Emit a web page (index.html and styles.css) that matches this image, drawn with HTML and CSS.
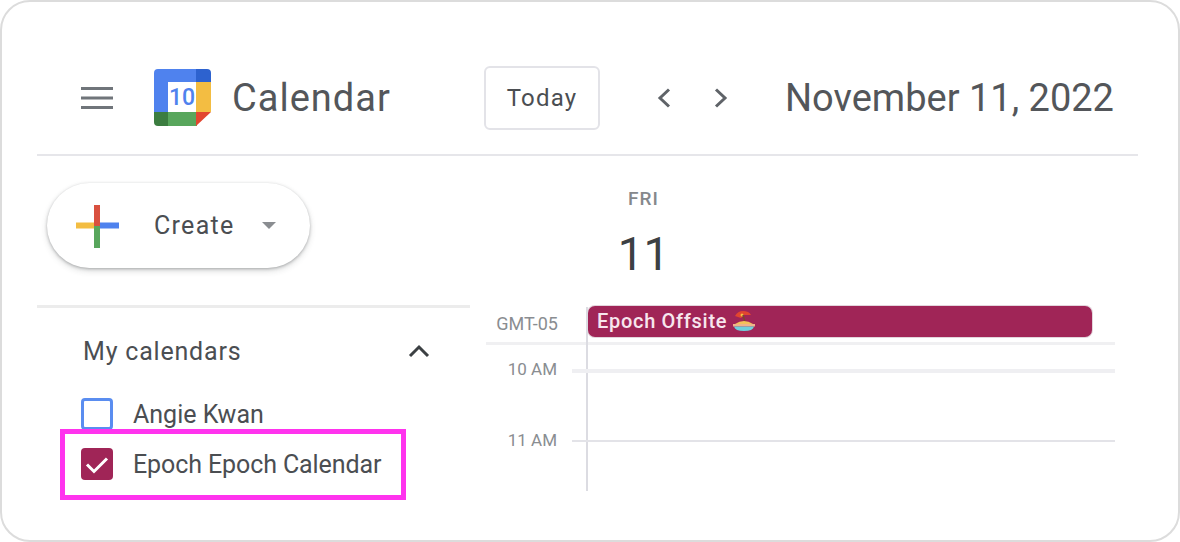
FILE: index.html
```html
<!DOCTYPE html>
<html lang="en">
<head>
<meta charset="utf-8">
<title>Calendar</title>
<link rel="stylesheet" href="styles.css">
</head>
<body>
<div class="frame">
  <header class="header">
    <svg class="menu" width="32" height="24" viewBox="0 0 32 24"><path d="M0 2.5h32M0 12h32M0 21.5h32" stroke="#70757a" stroke-width="3"/></svg>
    <svg class="logo" width="57" height="58" viewBox="0 0 57 58">
      <path d="M4 0H42V13H14V43H0V4Q0 0 4 0Z" fill="#4f82ee"/>
      <path d="M42 0H53Q57 0 57 4V13H42Z" fill="#2d62cf"/>
      <rect x="42" y="13" width="15" height="30" fill="#f3bd42"/>
      <path d="M14 43H43V57H14Z" fill="#58a65c"/>
      <path d="M0 43H14V57H4Q0 57 0 53Z" fill="#3b7d40"/>
      <path d="M42 43H57L42 57Z" fill="#e2462f"/>
      <rect x="14" y="13" width="28" height="30" fill="#fff"/>
      <text class="logo-num" x="28" y="36" text-anchor="middle">10</text>
    </svg>
    <span class="brand">Calendar</span>
    <button class="today">Today</button>
    <svg class="chev-l" width="16" height="22" viewBox="0 0 16 22"><path d="M13 2.5L4 11l9 8.500" fill="none" stroke="#5f6368" stroke-width="3"/></svg>
    <svg class="chev-r" width="16" height="22" viewBox="0 0 16 22"><path d="M3 2.500l9 8.500-9 8.500" fill="none" stroke="#5f6368" stroke-width="3"/></svg>
    <h1 class="date">November 11, 2022</h1>
  </header>
  <div class="body">
    <aside class="side">
      <div class="create-wrap">
        <button class="create">
          <svg width="44" height="44" viewBox="0 0 44 44">
            <rect x="1" y="18.500" width="21" height="6" fill="#f3bd42"/>
            <rect x="22" y="18.500" width="22" height="6" fill="#4f82ee"/>
            <rect x="19" y="1" width="6" height="21" fill="#d9503f"/>
            <rect x="19" y="22" width="6" height="22" fill="#58a65c"/>
          </svg>
          <span class="create-label">Create</span>
          <span class="caret"></span>
        </button>
      </div>
      <section class="cals">
        <div class="cals-head">
          <span class="cals-title">My calendars</span>
          <svg width="22" height="14" viewBox="0 0 22 14"><path d="M2 12l9-9 9 9" fill="none" stroke="#3c4043" stroke-width="3"/></svg>
        </div>
        <div class="cal-row first"><span class="box empty"></span><span>Angie Kwan</span></div>
        <div class="cal-row second">
          <span class="box checked"><svg width="32" height="32" viewBox="0 0 32 32"><path d="M6 16.500l7 7 13-13" fill="none" stroke="#fff" stroke-width="3"/></svg></span>
          <span class="cal-name">Epoch Epoch Calendar</span>
        </div>
      </section>
    </aside>
    <main class="main">
      <div class="dayhead">
        <span class="dow">FRI</span>
        <span class="dom">11</span>
      </div>
      <div class="allday">
        <span class="tz">GMT-05</span>
        <div class="event">Epoch Offsite
          <svg class="emoji" width="22" height="22" viewBox="0 0 22 22">
            <path d="M2 6Q6 -1 15 2Q17 3 18 5L11 5L8 8Z" fill="#e2462f"/>
            <circle cx="9" cy="5" r="1.500" fill="#f3bd42"/>
            <path d="M10 5l2 7" stroke="#7a4a2a" stroke-width="1.500"/>
            <path d="M2 14Q11 8 20 14Z" fill="#f3c25a"/>
            <path d="M0 14H22V16.500H0Z" fill="#f0b48a"/>
            <path d="M1 16.500H21Q20 21 11 21T1 16.500Z" fill="#6fd0dc"/>
          </svg>
        </div>
      </div>
      <div class="grid">
        <div class="hour h10"><span class="hlabel">10 AM</span><span class="hline thick"></span></div>
        <div class="hour h11"><span class="hlabel">11 AM</span><span class="hline"></span></div>
      </div>
    </main>
  </div>
  <div class="highlight"></div>
</div>
</body>
</html>
```
FILE: styles.css
```css
* { box-sizing: border-box; }
html, body { margin: 0; padding: 0; background: #fff; }
body { width: 1180px; height: 542px; overflow: hidden; font-family: Roboto, "Liberation Sans", sans-serif; color: #3c4043; }
.frame { position: relative; width: 1180px; height: 542px; border: 2px solid #dcdcdc; border-radius: 30px; padding: 0 40px 0 35px; }
.header { display: flex; align-items: center; height: 154px; padding: 40px 0 0 44px; border-bottom: 2px solid #e6e6ea; }
.menu { flex: none; }
.logo { flex: none; margin-left: 41px; }
.logo-num { font-family: Roboto, sans-serif; font-size: 23px; font-weight: 500; fill: #4f82ee; }
.brand { margin-left: 21px; font-size: 38px; color: #53565a; width: 252px; letter-spacing: 1px; }
.today { flex: none; width: 116px; height: 64px; background: #fff; border: 2px solid #e3e3e8; border-radius: 6px; font-family: inherit; font-size: 24px; color: #4b4e52; padding: 0; letter-spacing: 1.200px; }
.chev-l { flex: none; margin-left: 56px; }
.chev-r { flex: none; margin-left: 41px; }
.date { margin: 0 0 0 56px; font-size: 38px; font-weight: 400; color: #53565a; white-space: nowrap; }
.body { display: grid; grid-template-columns: 433px 1fr; }
.create-wrap { height: 152px; padding: 27px 0 0 10px; border-bottom: 3px solid #ececec; }
.create { display: flex; align-items: center; width: 263px; height: 85px; padding: 0 0 0 28px; border: 0; border-radius: 43px; background: #fff; box-shadow: 0 1px 3px rgba(60,64,67,.35), 0 3px 6px rgba(60,64,67,.18); font-family: inherit; }
.create-label { margin-left: 35px; font-size: 25px; color: #4b4e52; letter-spacing: 1.300px; }
.caret { margin-left: 27px; width: 0; height: 0; border-style: solid; border-width: 7px 7px 0; border-color: #8a8d91 transparent transparent; }
.cals { padding: 28px 0 0 44px; font-size: 25px; color: #4b4e52; }
.cals-head { display: flex; justify-content: space-between; align-items: center; height: 30px; padding-right: 40px; }
.cals-title { margin-left: 2px; letter-spacing: .8px; }
.cal-row { display: flex; align-items: center; gap: 20px; height: 32px; }
.cal-row.first { margin-top: 32px; }
.cal-row.second { margin-top: 18px; }
.cal-name { letter-spacing: -.1px; }
.box { flex: none; display: block; width: 32px; height: 32px; border-radius: 4px; }
.box.empty { border: 3px solid #5a8df0; }
.box.checked { background: #a02557; }
.box.checked svg { display: block; }
.main { position: relative; }
.dayhead { display: flex; flex-direction: column; align-items: center; height: 152px; width: 347px; padding-top: 31px; }
.dow { font-size: 19px; font-weight: 500; color: #85888c; letter-spacing: 1px; }
.dom { margin-top: 17px; font-size: 46px; color: #3c4043; }
.allday { display: flex; align-items: center; height: 40px; margin-top: -6px; position: relative; }
.tz { width: 88px; text-align: right; font-size: 18px; color: #8a8d91; padding-top: 3px; }
.event { display: flex; align-items: center; gap: 6px; margin: 0 0 2px 30px; width: 504px; height: 31px; padding: 0 9px; border-radius: 7px; background: #a02557; color: #f7e6ee; font-size: 20px; font-weight: 500; letter-spacing: .7px; box-shadow: 0 0 0 1px #e3d5dc; }
.emoji { flex: none; }
.grid { position: relative; height: 149px; margin-left: 16px; width: 629px; border-top: 3px solid #f0f0f2; }
.grid::before { content: ""; position: absolute; left: 100px; top: -38px; bottom: 0; width: 2px; background: #dcdce2; }
.hour { display: flex; align-items: center; height: 30px; position: absolute; left: 0; right: 0; }
.h10 { top: 9px; }
.h11 { top: 80px; }
.hlabel { width: 71px; font-size: 17px; color: #8a8d91; text-align: right; }
.hline { flex: 1; margin-left: 15px; margin-top: 2px; height: 2px; background: #e3e3e8; }
.hline.thick { height: 4px; margin-top: 4px; background: #efeff2; }
.highlight { position: absolute; left: 58px; top: 427px; width: 346px; height: 71px; border: 5px solid #ff33ee; pointer-events: none; }
```
